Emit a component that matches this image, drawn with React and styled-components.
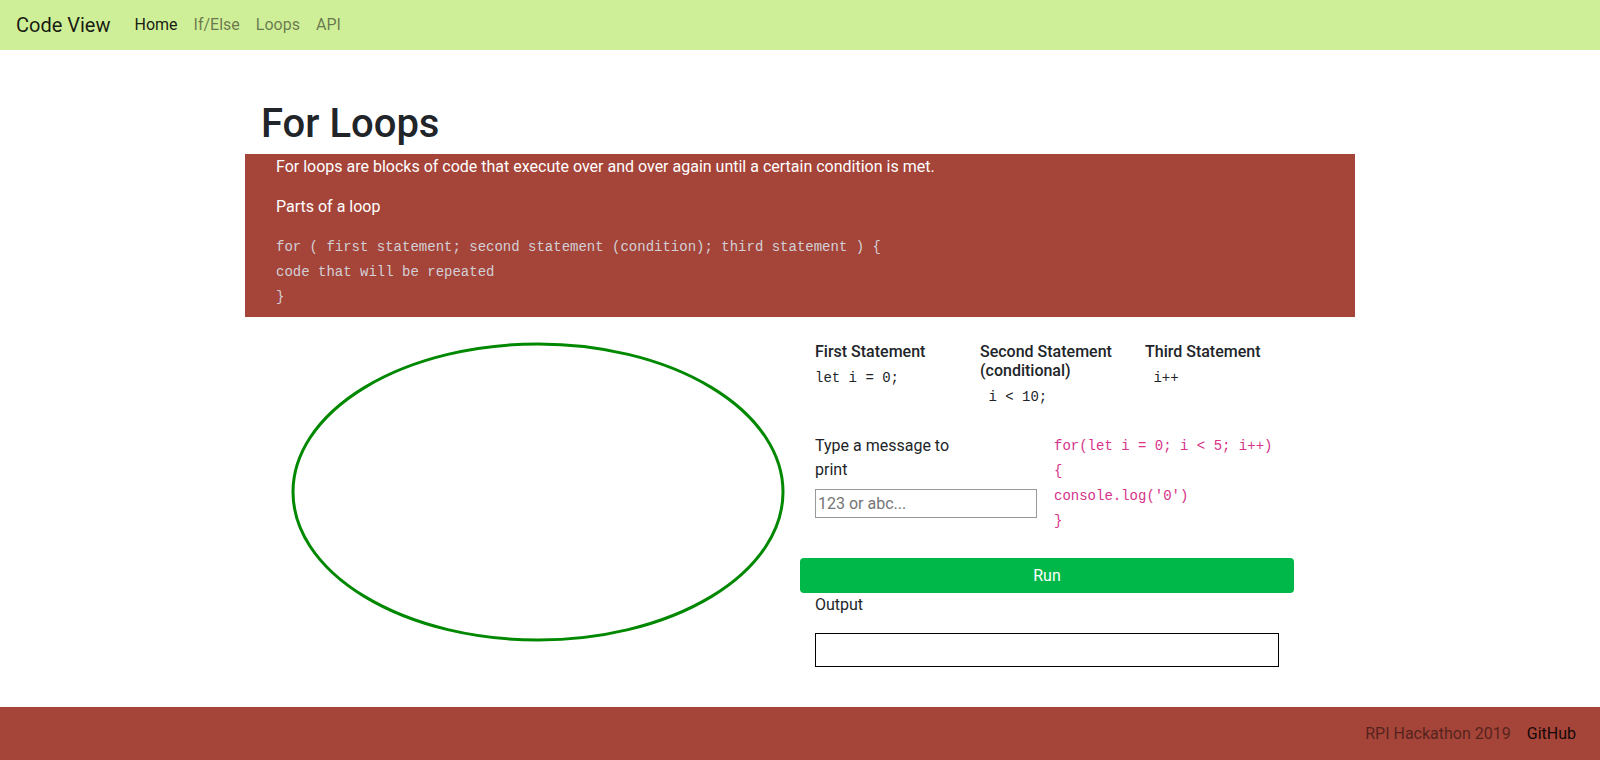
import styled, {createGlobalStyle} from 'styled-components'

const GlobalStyle = createGlobalStyle`
  html, body {
    margin: 0;
    padding: 0;
  }
  body {
    font-family: Roboto, 'Liberation Sans', sans-serif;
    font-size: 16px;
    line-height: 1.5;
    color: #212529;
    background-color: #fff;
  }
  * {
    box-sizing: border-box;
  }
`

const Page = styled.div`
  display: flex;
  flex-direction: column;
  min-height: 760px;
`

const NavBar = styled.nav`
  display: flex;
  align-items: center;
  height: 50px;
  padding: 0 16px;
  background-color: #cfee98;
`

const Brand = styled.span`
  font-size: 20px;
  color: rgba(0, 0, 0, 0.9);
  margin-right: 16px;
`

const NavLink = styled.a`
  padding: 0 8px;
  font-size: 16px;
  color: ${props => (props.active ? 'rgba(0, 0, 0, 0.9)' : 'rgba(0, 0, 0, 0.5)')};
  text-decoration: none;
`

const Main = styled.main`
  flex: 1;
  width: 1110px;
  margin: 0 auto;
`

const Title = styled.h1`
  margin: 50px 0 6px 16px;
  font-size: 40px;
  font-weight: 500;
  line-height: 48px;
  color: #212529;
`

const InfoBlock = styled.section`
  background-color: #a54439;
  color: #fff;
  padding: 1px 31px 7px;
`

const InfoText = styled.p`
  margin: 0 0 16px;
  line-height: 24px;
`

const InfoCode = styled.pre`
  margin: 0;
  font-family: 'Liberation Mono', 'DejaVu Sans Mono', monospace;
  font-size: 14px;
  line-height: 25px;
  color: #d2d0d6;
`

const DemoRow = styled.div`
  display: grid;
  grid-template-columns: 555px 555px;
`

const DrawingCol = styled.div`
  padding: 23px 0 0 43px;
`

const ControlsCol = styled.div`
  padding: 25px 15px 0;
`

const StatementRow = styled.div`
  display: grid;
  grid-template-columns: 165px 165px 165px;
`

const StatementTitle = styled.h5`
  margin: 0 0 5px;
  font-size: 16px;
  font-weight: 500;
  line-height: 1.2;
  color: #212529;
`

const MonoLine = styled.pre`
  margin: 0;
  font-family: 'Liberation Mono', 'DejaVu Sans Mono', monospace;
  font-size: 14px;
  line-height: ${props => props.lineHeight || '24px'};
  color: ${props => props.color || '#212529'};
`

const MessageRow = styled.div`
  display: flex;
  margin-top: 25px;
`

const MessageField = styled.div`
  width: 222px;
  margin-right: 17px;
`

const MessageLabel = styled.label`
  display: block;
  max-width: 165px;
  margin-bottom: 7px;
  line-height: 24px;
`

const MessageInput = styled.input`
  width: 222px;
  height: 29px;
  padding: 1px 2px;
  border: 1px solid #999;
  font-family: Roboto, 'Liberation Sans', sans-serif;
  font-size: 16px;
  &::placeholder {
    color: #757575;
  }
`

const RunButton = styled.button`
  display: block;
  width: 494px;
  height: 35px;
  margin: 24px 0 0 -15px;
  border: none;
  border-radius: 4px;
  background-color: #00b84a;
  color: #fff;
  font-family: Roboto, 'Liberation Sans', sans-serif;
  font-size: 16px;
`

const OutputLabel = styled.div`
  line-height: 24px;
  margin-bottom: 16px;
`

const OutputBox = styled.div`
  width: 464px;
  height: 34px;
  border: 1px solid #000;
`

const Footer = styled.footer`
  display: flex;
  justify-content: flex-end;
  align-items: center;
  height: 53px;
  padding: 0 16px;
  background-color: #a54439;
`

const FooterItem = styled.span`
  padding: 0 8px;
  color: ${props => (props.strong ? 'rgba(0, 0, 0, 0.9)' : 'rgba(0, 0, 0, 0.5)')};
`

const statements = [
  {title: 'First Statement', code: 'let i = 0;'},
  {title: 'Second Statement (conditional)', code: ' i < 10;'},
  {title: 'Third Statement', code: ' i++'},
]

const loopLines = ['for(let i = 0; i < 5; i++)', '{', "console.log('0')", '}']

function App() {
  return (
    <Page>
      <GlobalStyle />
      <NavBar>
        <Brand>Code View</Brand>
        <NavLink active>Home</NavLink>
        <NavLink>If/Else</NavLink>
        <NavLink>Loops</NavLink>
        <NavLink>API</NavLink>
      </NavBar>
      <Main>
        <Title>For Loops</Title>
        <InfoBlock>
          <InfoText>
            For loops are blocks of code that execute over and over again until
            a certain condition is met.
          </InfoText>
          <InfoText>Parts of a loop</InfoText>
          <InfoCode>
            {'for ( first statement; second statement (condition); third statement ) {\ncode that will be repeated\n}'}
          </InfoCode>
        </InfoBlock>
        <DemoRow>
          <DrawingCol>
            <svg width="500" height="304" viewBox="0 0 500 304">
              <ellipse
                cx="250"
                cy="152"
                rx="245"
                ry="148"
                fill="none"
                stroke="#008800"
                strokeWidth="3"
              />
            </svg>
          </DrawingCol>
          <ControlsCol>
            <StatementRow>
              {statements.map(item => (
                <div key={item.title}>
                  <StatementTitle>{item.title}</StatementTitle>
                  <MonoLine>{item.code}</MonoLine>
                </div>
              ))}
            </StatementRow>
            <MessageRow>
              <MessageField>
                <MessageLabel>Type a message to print</MessageLabel>
                <MessageInput placeholder="123 or abc..." />
              </MessageField>
              <div>
                {loopLines.map(line => (
                  <MonoLine key={line} color="#d6338a" lineHeight="25px">
                    {line}
                  </MonoLine>
                ))}
              </div>
            </MessageRow>
            <RunButton type="button">Run</RunButton>
            <OutputLabel>Output</OutputLabel>
            <OutputBox />
          </ControlsCol>
        </DemoRow>
      </Main>
      <Footer>
        <FooterItem>RPI Hackathon 2019</FooterItem>
        <FooterItem strong>GitHub</FooterItem>
      </Footer>
    </Page>
  )
}

export default App
